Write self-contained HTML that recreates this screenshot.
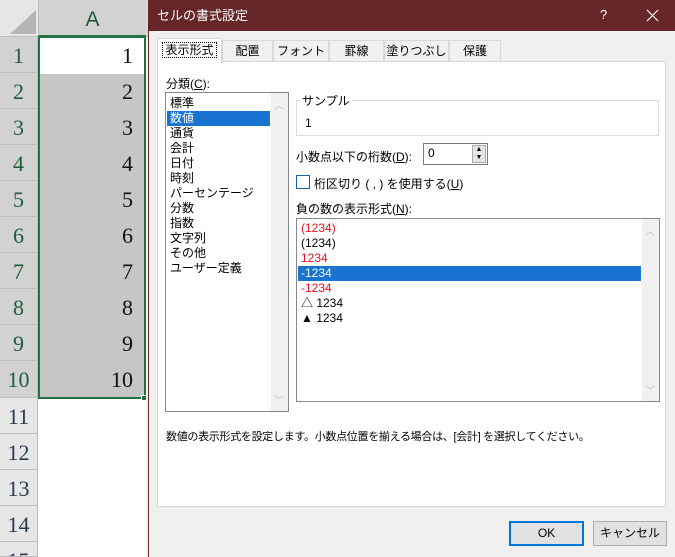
<!DOCTYPE html>
<html style="width:675px;height:557px;overflow:hidden"><head><meta charset="utf-8"><style>
*{margin:0;padding:0;box-sizing:border-box}
body{width:675px;height:557px;overflow:hidden;background:#fff;position:relative;font-family:"Liberation Sans","Noto Sans CJK JP",sans-serif;font-size:12px;color:#000}
.a{position:absolute}
.rh{position:absolute;left:0;width:38px;background:#e6e6e6;border-bottom:1px solid #bdbdbd;border-right:1px solid #bdbdbd;text-align:center;font-size:22px;color:#2a3a50;font-family:"Liberation Serif","Noto Serif CJK SC",serif}
.cell{position:absolute;left:39px;width:106px;text-align:right;padding-right:12px;font-size:22px;font-family:"Liberation Serif",serif;color:#111}
.it{position:absolute;left:0;right:0;height:15px;line-height:15px;padding-left:3px;white-space:nowrap}
.tab{position:absolute;top:40px;height:22px;border:1px solid #d9d9d9;border-bottom:none;background:#f0f0f0;text-align:center;line-height:20px;font-size:12px}
</style></head><body>
<div class="a" style="left:0;top:0;width:150px;height:37px;background:#e6e6e6;border-bottom:1px solid #bdbdbd"></div>
<div class="a" style="left:10px;top:10px;width:0;height:0;border-left:26px solid transparent;border-bottom:24px solid #b5b5b5"></div>
<div class="a" style="left:38px;top:0;width:108px;height:37px;background:#d2d2d2;border-left:1px solid #bdbdbd;border-bottom:2px solid #217346;text-align:center;line-height:40px;font-size:21px;color:#1e5d3a">A</div>
<div class="rh" style="top:37px;height:36px;line-height:38px;background:#d2d2d2;color:#1e5d3a">1</div>
<div class="rh" style="top:73px;height:36px;line-height:38px;background:#d2d2d2;color:#1e5d3a">2</div>
<div class="rh" style="top:109px;height:36px;line-height:38px;background:#d2d2d2;color:#1e5d3a">3</div>
<div class="rh" style="top:145px;height:36px;line-height:38px;background:#d2d2d2;color:#1e5d3a">4</div>
<div class="rh" style="top:181px;height:36px;line-height:38px;background:#d2d2d2;color:#1e5d3a">5</div>
<div class="rh" style="top:217px;height:36px;line-height:38px;background:#d2d2d2;color:#1e5d3a">6</div>
<div class="rh" style="top:253px;height:36px;line-height:38px;background:#d2d2d2;color:#1e5d3a">7</div>
<div class="rh" style="top:289px;height:36px;line-height:38px;background:#d2d2d2;color:#1e5d3a">8</div>
<div class="rh" style="top:325px;height:36px;line-height:38px;background:#d2d2d2;color:#1e5d3a">9</div>
<div class="rh" style="top:361px;height:37px;line-height:38px;background:#d2d2d2;color:#1e5d3a">10</div>
<div class="rh" style="top:398px;height:36px;line-height:38px">11</div>
<div class="rh" style="top:434px;height:36px;line-height:38px">12</div>
<div class="rh" style="top:470px;height:36px;line-height:38px">13</div>
<div class="rh" style="top:506px;height:36px;line-height:38px">14</div>
<div class="rh" style="top:542px;height:15px;line-height:38px;overflow:hidden">15</div>
<div class="a" style="left:39px;top:74px;width:106px;height:324px;background:#c6c6c6"></div>
<div class="cell" style="top:37px;line-height:38px">1</div>
<div class="cell" style="top:73px;line-height:38px">2</div>
<div class="cell" style="top:109px;line-height:38px">3</div>
<div class="cell" style="top:145px;line-height:38px">4</div>
<div class="cell" style="top:181px;line-height:38px">5</div>
<div class="cell" style="top:217px;line-height:38px">6</div>
<div class="cell" style="top:253px;line-height:38px">7</div>
<div class="cell" style="top:289px;line-height:38px">8</div>
<div class="cell" style="top:325px;line-height:38px">9</div>
<div class="cell" style="top:361px;line-height:38px">10</div>
<div class="a" style="left:38px;top:36px;width:108px;height:363px;border:2px solid #217346"></div>
<div class="a" style="left:141px;top:395px;width:6px;height:6px;background:#217346;border:1px solid #fff"></div>
<div class="a" style="left:145px;top:0;width:4px;height:557px;background:linear-gradient(to right,rgba(0,0,0,0),rgba(0,0,0,.12))"></div>
<div class="a" style="left:148px;top:0;width:527px;height:557px;background:#f0f0f0;border-left:1px solid #6b2a2c"></div>
<div class="a" style="left:148px;top:0;width:527px;height:31px;background:#662628;color:#fff;font-size:13px;line-height:31px;padding-left:9px">セルの書式設定</div>
<div class="a" style="left:600px;top:7px;color:#fff;font-size:13px">?</div>
<svg class="a" style="left:646px;top:9px" width="13" height="13"><path d="M1 1L12 12M12 1L1 12" stroke="#fff" stroke-width="1.2"/></svg>
<div class="tab" style="left:222px;width:51px">配置</div>
<div class="tab" style="left:273px;width:56px">フォント</div>
<div class="tab" style="left:329px;width:55px">罫線</div>
<div class="tab" style="left:384px;width:65px">塗りつぶし</div>
<div class="tab" style="left:449px;width:52px">保護</div>
<div class="a" style="left:157px;top:61px;width:509px;height:446px;background:#fff;border:1px solid #d9d9d9"></div>
<div class="tab" style="left:157px;top:38px;width:65px;height:25px;background:#fff;line-height:22px"><span style="border:1px dotted #000;padding:0 2px">表示形式</span></div>
<div class="a" style="left:166px;top:75px">分類(<u>C</u>):</div>
<div class="a" style="left:165px;top:92px;width:124px;height:320px;border:1px solid #828790;background:#fff">
 <div class="a" style="right:0;top:0;width:17px;height:318px;background:#f0f0f0"></div>
 <div class="a" style="right:4px;top:4px;color:#bbb;font-size:10px">︿</div>
 <div class="a" style="right:4px;bottom:4px;color:#bbb;font-size:10px">﹀</div>
 <div class="a" style="left:1px;top:3px;width:103px">
 <div class="it" style="top:0">標準</div>
 <div class="it" style="top:15px;background:#1874d0;color:#fff">数値</div>
 <div class="it" style="top:30px">通貨</div>
 <div class="it" style="top:45px">会計</div>
 <div class="it" style="top:60px">日付</div>
 <div class="it" style="top:75px">時刻</div>
 <div class="it" style="top:90px">パーセンテージ</div>
 <div class="it" style="top:105px">分数</div>
 <div class="it" style="top:120px">指数</div>
 <div class="it" style="top:135px">文字列</div>
 <div class="it" style="top:150px">その他</div>
 <div class="it" style="top:165px">ユーザー定義</div>
 </div>
</div>
<div class="a" style="left:296px;top:100px;width:363px;height:36px;border:1px solid #dcdcdc"></div>
<div class="a" style="left:300px;top:92px;background:#fff;padding:0 2px">サンプル</div>
<div class="a" style="left:305px;top:116px">1</div>
<div class="a" style="left:296px;top:148px">小数点以下の桁数(<u>D</u>):</div>
<div class="a" style="left:423px;top:143px;width:65px;height:22px;border:1px solid #7a7a7a;background:#fff;padding:2px 0 0 4px">0
 <div class="a" style="right:1px;top:1px;width:14px;height:18px;background:#e5e5e5;border:1px solid #ababab;font-size:7px;line-height:8px;text-align:center">▲<br>▼</div></div>
<div class="a" style="left:296px;top:175px;width:14px;height:14px;border:1px solid #1a5fa8"></div>
<div class="a" style="left:314px;top:175px">桁区切り ( , ) を使用する(<u>U</u>)</div>
<div class="a" style="left:296px;top:200px">負の数の表示形式(<u>N</u>):</div>
<div class="a" style="left:296px;top:218px;width:364px;height:184px;border:1px solid #828790;background:#fff">
 <div class="a" style="right:0;top:0;width:17px;height:182px;background:#f0f0f0"></div>
 <div class="a" style="right:4px;top:4px;color:#bbb;font-size:10px">︿</div>
 <div class="a" style="right:4px;bottom:4px;color:#bbb;font-size:10px">﹀</div>
 <div class="a" style="left:1px;top:2px;width:343px">
 <div class="it" style="top:0;color:#e81123">(1234)</div>
 <div class="it" style="top:15px">(1234)</div>
 <div class="it" style="top:30px;color:#e81123">1234</div>
 <div class="it" style="top:45px;background:#1874d0;color:#fff">-1234</div>
 <div class="it" style="top:60px;color:#e81123">-1234</div>
 <div class="it" style="top:75px">△ 1234</div>
 <div class="it" style="top:90px">▲ 1234</div>
 </div>
</div>
<div class="a" style="left:166px;top:428px;font-size:11px;letter-spacing:-0.3px">数値の表示形式を設定します。小数点位置を揃える場合は、[会計] を選択してください。</div>
<div class="a" style="left:509px;top:521px;width:75px;height:25px;border:2px solid #0078d7;background:#e1e1e1;text-align:center;line-height:21px">OK</div>
<div class="a" style="left:593px;top:521px;width:74px;height:25px;border:1px solid #adadad;background:#e1e1e1;text-align:center;line-height:23px">キャンセル</div>
</body></html>
